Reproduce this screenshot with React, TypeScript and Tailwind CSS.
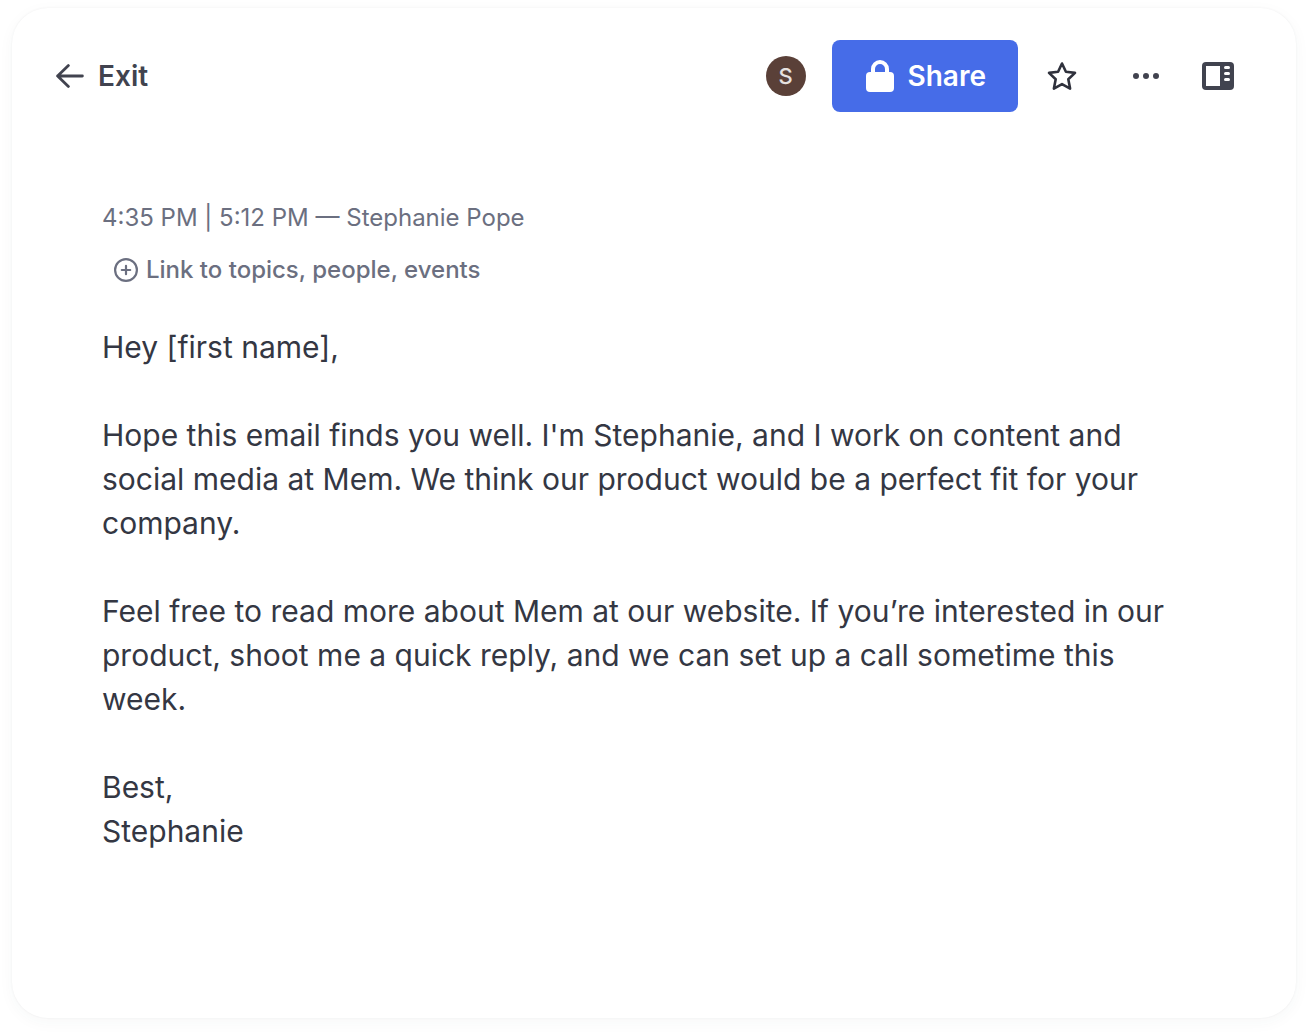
import { useState } from "react";

const paragraphs: string[][] = [
  ["Hey [first name],"],
  [
    "Hope this email finds you well. I'm Stephanie, and I work on content and social media at Mem. We think our product would be a perfect fit for your company.",
  ],
  [
    "Feel free to read more about Mem at our website. If you’re interested in our product, shoot me a quick reply, and we can set up a call sometime this week.",
  ],
  ["Best,", "Stephanie"],
];

function ArrowLeftIcon() {
  return (
    <svg viewBox="0 0 28 24" className="h-6 w-7" fill="none" stroke="currentColor" strokeWidth="2.8" strokeLinecap="round" strokeLinejoin="round" aria-hidden="true">
      <path d="M26.4 12H1.6M12.4 1.6 1.6 12l10.8 10.4" />
    </svg>
  );
}

function LockIcon() {
  return (
    <svg viewBox="0 0 28 32" className="h-8 w-7" aria-hidden="true">
      <path d="M7 14V9a7 7 0 0 1 14 0v5" fill="none" stroke="currentColor" strokeWidth="4" />
      <rect y="12" width="28" height="20" rx="4" fill="currentColor" />
    </svg>
  );
}

function StarIcon() {
  return (
    <svg viewBox="0 0 30 30" className="size-[30px]" fill="none" stroke="currentColor" strokeWidth="2.6" strokeLinejoin="round" aria-hidden="true">
      <path d="m15 2.5 3.9 8.3 9.1 1.1-6.7 6.3 1.8 9.4-8.1-4.5-8.1 4.5 1.8-9.4L2 11.9l9.1-1.1Z" />
    </svg>
  );
}

function DotsIcon() {
  return (
    <svg viewBox="0 0 26 6" className="h-[6px] w-[26px]" fill="currentColor" aria-hidden="true">
      <circle cx="3" cy="3" r="3" />
      <circle cx="13" cy="3" r="3" />
      <circle cx="23" cy="3" r="3" />
    </svg>
  );
}

function SidePanelIcon() {
  return (
    <svg viewBox="0 0 32 28" className="h-7 w-8" aria-hidden="true">
      <rect width="32" height="28" rx="4" fill="currentColor" />
      <path d="M4 4h14v20H4Z" fill="#fff" />
      <rect x="22" y="4" width="6" height="3" rx="1.5" fill="#fff" />
      <rect x="22" y="10" width="6" height="3" rx="1.5" fill="#fff" />
      <rect x="22" y="16" width="6" height="3" rx="1.5" fill="#fff" />
    </svg>
  );
}

function PlusCircleIcon() {
  return (
    <svg viewBox="0 0 24 24" className="size-6" fill="none" stroke="currentColor" strokeWidth="2.2" strokeLinecap="round" aria-hidden="true">
      <circle cx="12" cy="12" r="10.9" />
      <path d="M12 7.8v8.4M7.8 12h8.4" />
    </svg>
  );
}

export default function App() {
  const [starred, setStarred] = useState(false);

  return (
    <div className="flex min-h-screen flex-col bg-white px-3 pt-2 pb-4 font-['Inter',sans-serif]">
      <main className="flex-1 rounded-[36px] bg-white shadow-[0_0_2px_rgba(60,64,80,0.08),0_4px_16px_rgba(60,64,80,0.04)]">
        <header className="flex items-center justify-between pt-8 pr-[58px] pl-11 text-[#41434f]">
          <button type="button" className="flex items-center gap-[14px] text-[28px] leading-9 font-semibold">
            <ArrowLeftIcon />
            Exit
          </button>

          <div className="flex items-center">
            <span className="flex size-10 items-center justify-center rounded-full bg-[#5a4038] text-[22px] leading-none font-medium text-[#e6e1e0]">S</span>
            <button type="button" className="ml-[26px] flex h-[72px] items-center gap-[14px] rounded-lg bg-[#466ce8] pr-8 pl-[34px] text-[28px] font-semibold text-white">
              <LockIcon />
              Share
            </button>
            <button
              type="button"
              aria-label="Favorite"
              aria-pressed={starred}
              onClick={() => setStarred(!starred)}
              className="ml-6 flex size-10 items-center justify-center text-[#2f313c]"
            >
              <StarIcon />
            </button>
            <button type="button" aria-label="More options" className="ml-11 flex size-10 items-center justify-center">
              <DotsIcon />
            </button>
            <button type="button" aria-label="Toggle side panel" className="ml-8 flex size-10 items-center justify-center">
              <SidePanelIcon />
            </button>
          </div>
        </header>

        <article className="pt-[88px] pr-28 pb-20 pl-[90px]">
          <p className="text-[24px] leading-9 text-[#6b6f80]">4:35 PM | 5:12 PM — Stephanie Pope</p>
          <button type="button" className="mt-4 ml-3 flex items-center gap-2 text-[24px] leading-9 font-medium text-[#6b6f80]">
            <PlusCircleIcon />
            Link to topics, people, events
          </button>

          <div className="mt-[37px] flex flex-col gap-11 text-[30px] leading-[44px] text-[#343743]">
            {paragraphs.map((lines) => (
              <p key={lines[0]}>
                {lines.map((line) => (
                  <span key={line} className="block">
                    {line}
                  </span>
                ))}
              </p>
            ))}
          </div>
        </article>
      </main>
    </div>
  );
}
